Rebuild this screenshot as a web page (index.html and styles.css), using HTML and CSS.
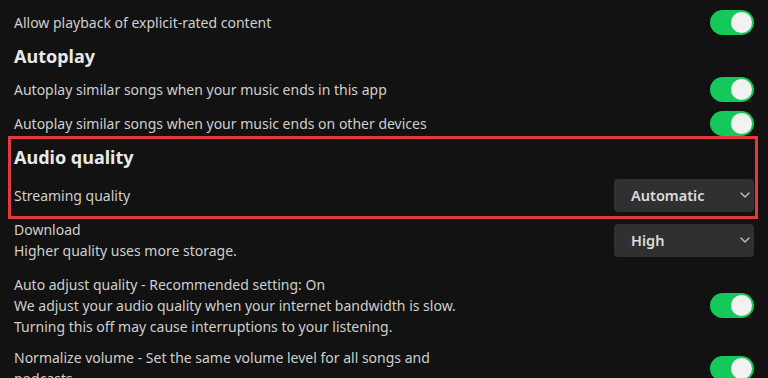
FILE: index.html
```html
<!DOCTYPE html>
<html lang="en">
<head>
<meta charset="utf-8">
<title>Settings</title>
<link rel="stylesheet" href="styles.css">
</head>
<body>
<main class="settings">
  <div class="row row-first">
    <span class="label">Allow playback of explicit-rated content</span>
    <span class="toggle"><span class="knob"></span></span>
  </div>

  <h2 class="heading heading-autoplay">Autoplay</h2>
  <div class="row row-s">
    <span class="label">Autoplay similar songs when your music ends in this app</span>
    <span class="toggle"><span class="knob"></span></span>
  </div>
  <div class="row row-s">
    <span class="label">Autoplay similar songs when your music ends on other devices</span>
    <span class="toggle"><span class="knob"></span></span>
  </div>

  <h2 class="heading heading-audio">Audio quality</h2>
  <div class="row row-stream">
    <span class="label">Streaming quality</span>
    <div class="select">
      <span>Automatic</span>
      <svg class="chev" viewBox="0 0 10 6" width="10" height="6"><path d="M1 1 L5 5 L9 1" fill="none" stroke="currentColor" stroke-width="1.4" stroke-linecap="round" stroke-linejoin="round"/></svg>
    </div>
  </div>

  <div class="row row-download">
    <div class="texts">
      <span class="label">Download</span>
      <span class="label">Higher quality uses more storage.</span>
    </div>
    <div class="select">
      <span>High</span>
      <svg class="chev" viewBox="0 0 10 6" width="10" height="6"><path d="M1 1 L5 5 L9 1" fill="none" stroke="currentColor" stroke-width="1.4" stroke-linecap="round" stroke-linejoin="round"/></svg>
    </div>
  </div>

  <div class="row row-auto">
    <div class="texts">
      <span class="label">Auto adjust quality - Recommended setting: On</span>
      <span class="label">We adjust your audio quality when your internet bandwidth is slow.</span>
      <span class="label">Turning this off may cause interruptions to your listening.</span>
    </div>
    <span class="toggle"><span class="knob"></span></span>
  </div>

  <div class="row row-norm">
    <div class="texts">
      <span class="label">Normalize volume - Set the same volume level for all songs and</span>
      <span class="label">podcasts</span>
    </div>
    <span class="toggle"><span class="knob"></span></span>
  </div>

  <div class="highlight" aria-hidden="true"></div>
</main>
</body>
</html>
```

FILE: styles.css
```css
html, body {
  margin: 0;
  padding: 0;
  background: #121212;
}

body {
  width: 768px;
  height: 378px;
  overflow: hidden;
  font-family: "Noto Sans", "Liberation Sans", sans-serif;
  font-size: 14px;
  color: #cfcfcf;
}

.settings {
  position: relative;
  display: flex;
  flex-direction: column;
  padding: 0 14px;
}

.row {
  display: flex;
  align-items: center;
  justify-content: space-between;
}

.row-first { height: 44px; }
.row-s { height: 34px; }
.row-stream { height: 38px; margin-top: 7px; }
.row-download { height: 42px; margin-top: 5px; }
.row-auto { height: 63px; margin-top: 13px; }
.row-norm { height: 42px; margin-top: 10px; }

.label {
  line-height: 21px;
  white-space: nowrap;
}

.texts {
  display: flex;
  flex-direction: column;
}

.heading {
  margin: 0;
  height: 24px;
  line-height: 24px;
  font-size: 18px;
  font-weight: 700;
  color: #e9e9e9;
}

.heading-autoplay { margin-bottom: 4px; }
.heading-audio { margin-top: 5px; }

.toggle {
  flex: none;
  width: 44px;
  height: 25px;
  border-radius: 13px;
  background: #14c95a;
  display: flex;
  align-items: center;
  justify-content: flex-end;
  padding-right: 2px;
  box-sizing: border-box;
}

.knob {
  width: 21px;
  height: 21px;
  border-radius: 50%;
  background: #f2f2f2;
}

.select {
  flex: none;
  width: 140px;
  height: 33px;
  box-sizing: border-box;
  background: #303030;
  border-radius: 4px;
  display: flex;
  align-items: center;
  justify-content: space-between;
  padding: 0 4px 0 17px;
  font-size: 14.5px;
  font-weight: 600;
  color: #dcdcdc;
}

.chev {
  color: #bdbdbd;
  margin-right: 0;
}

.highlight {
  position: absolute;
  left: 8px;
  top: 136px;
  width: 750px;
  height: 83px;
  box-sizing: border-box;
  border: 3px solid #e0393f;
  pointer-events: none;
}
```
